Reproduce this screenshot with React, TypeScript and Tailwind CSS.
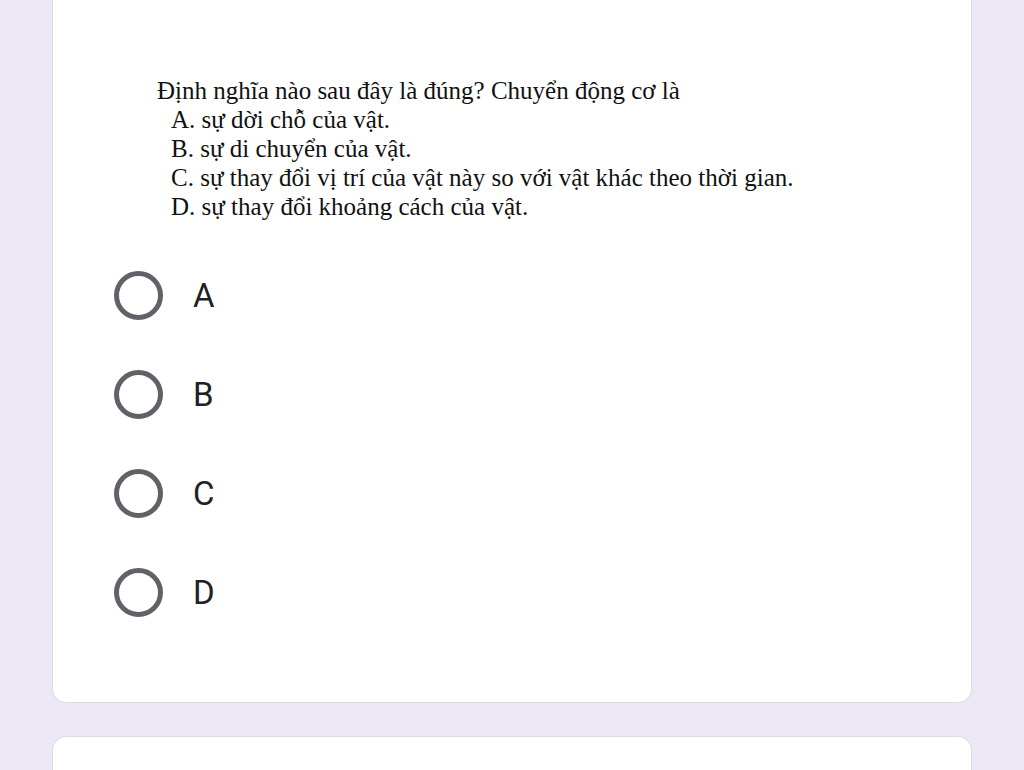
import React from "react";

const options = ["A", "B", "C", "D"];

export default function App() {
  return (
    <div className="h-[770px] w-[1024px] overflow-hidden bg-[#ece8f6]">
      <div className="ml-[52px] w-[920px] rounded-b-[14px] border-x border-b border-[#dcd9e3] bg-white pb-[85px]">
        <div
          className="pl-[104px] pt-[76px] text-[25px] leading-[29px] text-[#111111]"
          style={{ fontFamily: '"Liberation Serif", "Times New Roman", serif' }}
        >
          <div>Định nghĩa nào sau đây là đúng? Chuyển động cơ là</div>
          <div className="pl-[14px]">A. sự dời chỗ của vật.</div>
          <div className="pl-[14px]">B. sự di chuyển của vật.</div>
          <div className="pl-[14px]">C. sự thay đổi vị trí của vật này so với vật khác theo thời gian.</div>
          <div className="pl-[14px]">D. sự thay đổi khoảng cách của vật.</div>
        </div>
        <div className="mt-[49px] flex flex-col gap-[49px] pl-[61px]">
          {options.map((o) => (
            <div key={o} className="flex h-[50px] items-center gap-[30px]">
              <div className="h-[49px] w-[49px] rounded-full border-[5px] border-[#5f6368]" />
              <span
                className="text-[33px] leading-none text-[#202124]"
                style={{ fontFamily: "Roboto, sans-serif" }}
              >
                {o}
              </span>
            </div>
          ))}
        </div>
      </div>
      <div className="ml-[52px] mt-[33px] h-[100px] w-[920px] rounded-t-[14px] border-x border-t border-[#dcd9e3] bg-white" />
    </div>
  );
}
